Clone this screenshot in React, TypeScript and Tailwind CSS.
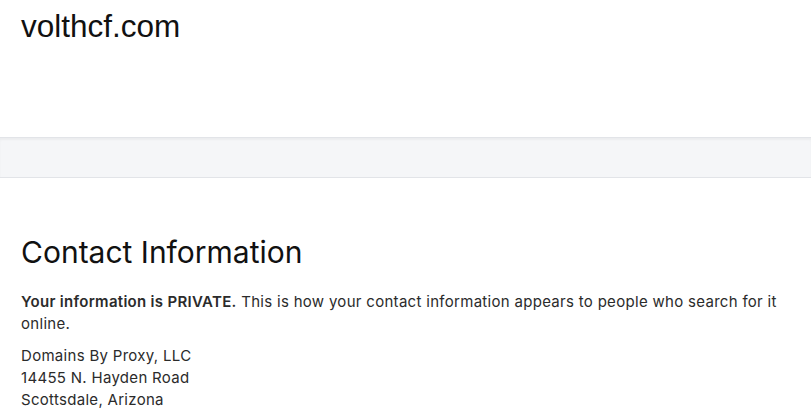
export default function App() {
  return (
    <div className="min-h-screen bg-white text-[#111]" style={{ fontFamily: '"Liberation Sans", Arial, sans-serif' }}>
      <header className="h-[137px] px-[21px] pt-[7px]">
        <h1 className="text-[31.5px] leading-[38px]">volthcf.com</h1>
      </header>
      <div className="h-[41px] border-y border-[#e2e4e8] bg-[#f5f6f8] shadow-[inset_0_2px_2px_rgba(0,0,0,0.04)]" />
      <section className="px-[21px] pt-[55px] font-['Inter',sans-serif]">
        <h2 className="text-[30px] leading-[38px] text-[#111]">Contact Information</h2>
        <p className="mt-[20px] text-[15px] leading-[22px] tracking-[0.3px] text-[#2b2b2b]">
          <span className="font-semibold">Your information is PRIVATE.</span> This is how your contact information appears to people who search for it online.
        </p>
        <div className="mt-[10px] text-[15px] leading-[22px] tracking-[0.3px] text-[#2b2b2b]">
          <div>Domains By Proxy, LLC</div>
          <div>14455 N. Hayden Road</div>
          <div>Scottsdale, Arizona</div>
        </div>
      </section>
    </div>
  );
}
